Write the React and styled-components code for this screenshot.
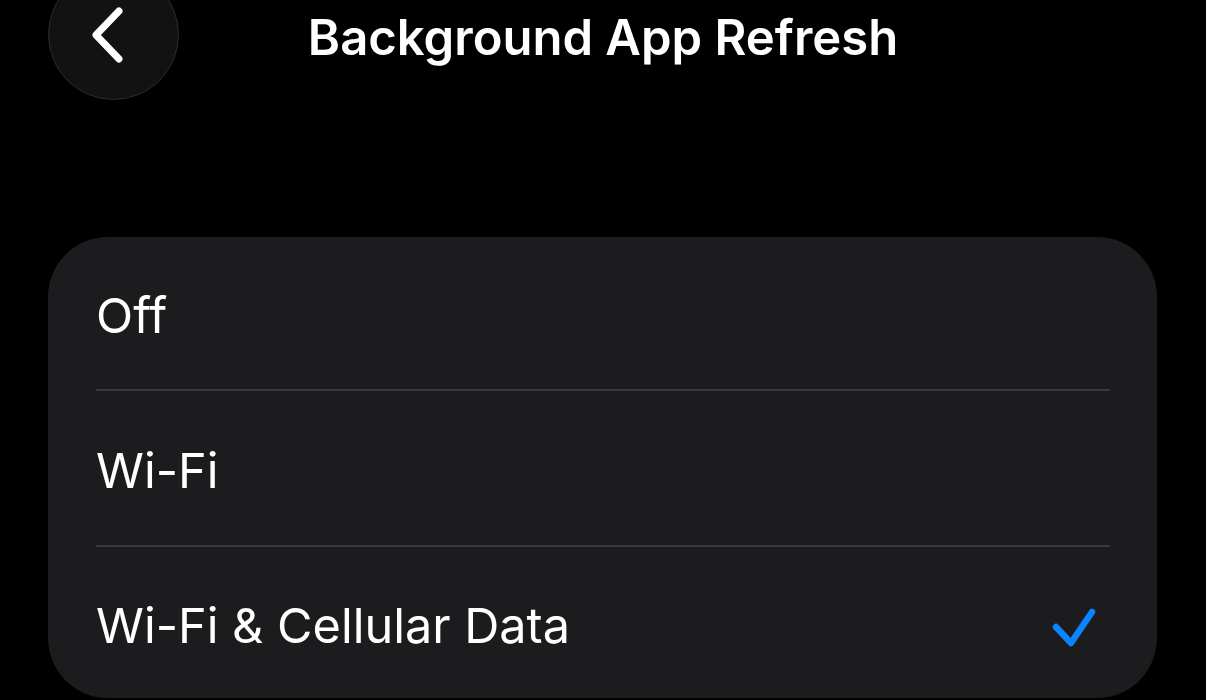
import React from "react";
import styled, { createGlobalStyle } from "styled-components";

const Global = createGlobalStyle`
  html, body { margin: 0; padding: 0; background: #000; }
  body { font-family: Inter, "Noto Sans", sans-serif; color: #fff; overflow: hidden; }
  * { box-sizing: border-box; }
`;

const Page = styled.div`
  width: 1206px;
  height: 700px;
  background: #000;
  display: flex;
  flex-direction: column;
  overflow: hidden;
`;

const Header = styled.header`
  display: grid;
  grid-template-columns: 1fr auto 1fr;
  align-items: center;
  margin-top: -31px;
  padding: 0 48px;
  height: 131px;
`;

const BackButton = styled.button`
  width: 131px;
  height: 131px;
  border-radius: 50%;
  background: #121212;
  border: 1.5px solid #2c2c2e;
  display: flex;
  align-items: center;
  justify-content: center;
  padding: 0 10px 0 0;
  cursor: pointer;
  justify-self: start;
`;

const Title = styled.h1`
  margin: 0;
  margin-top: 6px;
  font-size: 49px;
  font-weight: 600;
  letter-spacing: 0px;
  color: #fff;
  text-align: center;
`;

const Card = styled.div`
  margin: 137px 49px 0 48px;
  background: #1c1c1e;
  border-radius: 60px;
  display: flex;
  flex-direction: column;
  padding: 0 47px 0 48px;
`;

const Row = styled.div`
  height: ${(p) => p.$h}px;
  display: flex;
  align-items: center;
  justify-content: space-between;
  padding-top: 5px;
  border-bottom: ${(p) => (p.$last ? "none" : "2px solid #38383a")};
`;

const Label = styled.span`
  font-size: 48.6px;
  font-weight: 400;
  color: #fff;
`;

const CheckIcon = styled.svg`
  margin-right: 11px;
  margin-top: 3px;
`;

const Check = () => (
  <CheckIcon width="50" height="46" viewBox="0 0 50 46">
    <path d="M7 23 L22 39 L43 8" fill="none" stroke="#0a84ff" strokeWidth="6.5" strokeLinecap="round" strokeLinejoin="round" />
  </CheckIcon>
);

const Chevron = () => (
  <svg width="40" height="60" viewBox="0 0 40 60">
    <path d="M30 6 L7 30 L30 54" fill="none" stroke="#fff" strokeWidth="7" strokeLinecap="round" strokeLinejoin="round" />
  </svg>
);

const options = [
  { label: "Off", h: 154 },
  { label: "Wi-Fi", h: 156 },
  { label: "Wi-Fi & Cellular Data", h: 151, checked: true },
];

export default function App() {
  return (
    <Page>
      <Global />
      <Header>
        <BackButton aria-label="Back">
          <Chevron />
        </BackButton>
        <Title>Background App Refresh</Title>
        <div />
      </Header>
      <Card>
        {options.map((o, i) => (
          <Row key={o.label} $h={o.h} $last={i === options.length - 1}>
            <Label>{o.label}</Label>
            {o.checked && <Check />}
          </Row>
        ))}
      </Card>
    </Page>
  );
}
